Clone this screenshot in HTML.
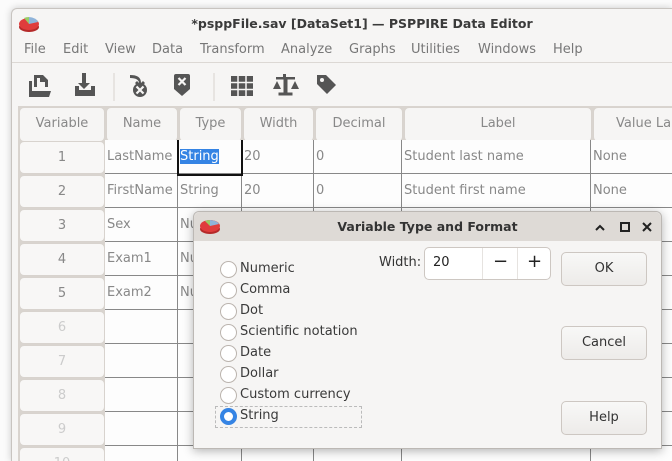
<!DOCTYPE html>
<html><head><style>
*{box-sizing:border-box;margin:0;padding:0}
html,body{overflow:hidden}
body{width:672px;height:461px;background:#fbfbfb;font-family:"DejaVu Sans","Liberation Sans",sans-serif;font-size:13px;color:#333;position:relative}
.win{position:absolute;left:11px;top:8px;width:661px;height:453px;background:#f6f5f4;border:1px solid #c8c4c0;border-bottom:none;border-right:none;border-radius:6px 0 0 0;box-shadow:0 0 8px rgba(0,0,0,.2);overflow:hidden}
.abs{position:absolute}
.title{left:0;top:0;width:100%;height:30px;text-align:center;font-weight:bold;font-size:12.5px;line-height:30px;color:#3a3a3a;padding-left:40px}
.menu{top:30px;left:0;height:24px;width:100%;border-bottom:1px solid #dcd8d4;color:#777}
.menu span{position:absolute;top:3px}
.grid{left:6px;top:97px;width:660px;height:360px;background:#d9d4cf}
.cell{position:absolute;background:#fdfdfd;border-right:1px solid #888;border-bottom:1px solid #888;color:#888;padding-left:2px;line-height:33px;white-space:nowrap;overflow:hidden}
.hdr{position:absolute;background:#f6f5f4;border:1px solid #d8d3ce;border-radius:5px;text-align:center;color:#888;line-height:32px;white-space:nowrap;overflow:hidden}
.dlg{position:absolute;left:193px;top:211px;width:469px;height:238px;background:#f6f5f4;border:1px solid #bcb8b4;border-radius:6px 6px 0 0;box-shadow:0 2px 10px rgba(0,0,0,.3)}
.radio{position:absolute;left:26px;width:17px;height:17px;border:1px solid #bbb4ae;border-radius:50%;background:#fff}
.rl{position:absolute;left:46px;color:#3a3a3a}
.btn{position:absolute;left:367px;width:86px;height:34px;border:1px solid #cdc7c2;border-radius:5px;background:linear-gradient(#f8f8f7,#edebe9);text-align:center;line-height:32px;color:#333}
#rows{position:absolute;left:0;top:0;width:672px;height:461px;overflow:hidden}
</style></head><body>
<div class="win">
 <svg class="abs" style="left:6px;top:5px" width="22" height="20"><ellipse cx="11" cy="13" rx="10" ry="5" fill="#b52a2a"/><ellipse cx="11" cy="10" rx="10" ry="6" fill="#e03c3c"/><path d="M11 10 L11 3 A10 6 0 0 1 20 8 Z" fill="#8fb3d9"/><path d="M11 10 L6 4 A10 6 0 0 1 11 3 Z" fill="#9c6"/></svg>
 <div class="abs title">*psppFile.sav [DataSet1] — PSPPIRE Data Editor</div>
 <div class="abs menu"><span style="left:12px">File</span><span style="left:51px">Edit</span><span style="left:93px">View</span><span style="left:140px">Data</span><span style="left:188px">Transform</span><span style="left:269px">Analyze</span><span style="left:337px">Graphs</span><span style="left:399px">Utilities</span><span style="left:466px">Windows</span><span style="left:541px">Help</span></div>
 <svg class="abs" style="left:0;top:55px" width="340" height="40" fill="#555">
  <path d="M22 11h9l5 5v7h-3v-5h-5v-4h-3v9h-3zM17 17h3v10h19l-2 6h-20z"/>
  <path d="M70 9h4v10h4l-6 6-6-6h4zM63 22h4v4h12v-4h4v10h-20z"/>
  <path d="M118 11c7 0 11 2 11 8l2-2 2 2-5 5-5-5 2-2 2 2c0-3-3-5-9-5z"/><circle cx="128" cy="26" r="7"/><path d="M124.5 22.5l7 7M131.5 22.5l-7 7" stroke="#f6f5f4" stroke-width="2.2"/>
  <path d="M164 10h12a2 2 0 0 1 2 2v13l-8 7-8-7v-13a2 2 0 0 1 2-2z"/><path d="M166.5 14l7 7M173.5 14l-7 7" stroke="#f6f5f4" stroke-width="2.2"/>
  <rect x="219" y="12" width="22" height="20"/><path d="M219 18.5h22M219 25.5h22M226 12v20M234 12v20" stroke="#f6f5f4" stroke-width="1.5"/>
  <path d="M271 10h3v3h9v2.5h-7.5v13h5v3h-14v-3h5v-13h-7.5v-2.5h7z"/><path d="M261 25l4-8 4 8z M279 25l4-8 4 8z"/>
  <path d="M305 11h9l10 10-9 9-10-10z"/><circle cx="310" cy="16" r="2" fill="#f6f5f4"/>
  <path d="M102 9v28M202 9v28" stroke="#d8d3ce"/>
 </svg>
 <div class="abs grid">
  <div class="hdr" style="left:1px;top:1px;width:86px;height:35px">Variable</div>
  <div class="hdr" style="left:88px;top:1px;width:72px;height:35px">Name</div>
  <div class="hdr" style="left:161px;top:1px;width:63px;height:35px">Type</div>
  <div class="hdr" style="left:225px;top:1px;width:71px;height:35px">Width</div>
  <div class="hdr" style="left:297px;top:1px;width:88px;height:35px">Decimal</div>
  <div class="hdr" style="left:386px;top:1px;width:188px;height:35px">Label</div>
  <div class="hdr" style="left:575px;top:1px;width:120px;height:35px;text-align:left;padding-left:22px">Value Labels</div>
 </div>
</div>
<div id="rows"></div>
<script>
var cols=[105,178,242,314,402,591,680];
var data=[["LastName","String","20","0","Student last name","None"],["FirstName","String","20","0","Student first name","None"],["Sex","Nu","","","",""],["Exam1","Nu","","","",""],["Exam2","Nu","","","",""]];
var h="";
for(var r=0;r<10;r++){var y=140+r*34;
 h+='<div class="hdr" style="left:19px;top:'+(y+1)+'px;width:86px;height:33px;background:#f8f7f6;color:'+(r<5?'#888':'#ccc')+'">'+(r+1)+'</div>';
 for(var c=0;c<6;c++){var t=r<5?data[r][c]:"";
  if(r==0&&c==1)t='<span style="background:#3584e4;color:#fff">String</span>';
  h+='<div class="cell" style="left:'+cols[c]+'px;top:'+y+'px;width:'+(cols[c+1]-cols[c])+'px;height:34px">'+t+'</div>';}
}
h+='<div style="position:absolute;left:177px;top:140px;width:66px;height:36px;border:2px solid #111;border-top:none"></div>';
document.getElementById('rows').innerHTML=h;
</script>
<div class="dlg">
 <div class="abs" style="left:0;top:0;width:100%;height:29px;background:#dedad6;border-radius:6px 6px 0 0"></div>
 <svg class="abs" style="left:5px;top:5px" width="22" height="19"><ellipse cx="11" cy="12" rx="10" ry="5" fill="#b52a2a"/><ellipse cx="11" cy="9" rx="10" ry="6" fill="#e03c3c"/><path d="M11 9 L11 3 A10 6 0 0 1 20 7 Z" fill="#8fb3d9"/><path d="M11 9 L6 4 A10 6 0 0 1 11 3 Z" fill="#9c6"/></svg>
 <div class="abs" style="left:0;top:0;width:100%;text-align:center;line-height:29px;font-weight:bold;font-size:12.5px;color:#333">Variable Type and Format</div>
 <svg class="abs" style="left:398px;top:8px" width="62" height="14" stroke="#222" stroke-width="2" fill="none"><path d="M4 10l4-4 4 4"/><rect x="29" y="3" width="8" height="8"/><path d="M51 3l8 8M59 3l-8 8"/></svg>
 <div class="abs" style="left:185px;top:43px;color:#333">Width:</div>
 <div class="abs" style="left:230px;top:35px;width:127px;height:33px;background:#fff;border:1px solid #cdc7c2;border-radius:5px">
  <span class="abs" style="left:8px;top:7px;color:#222">20</span>
  <div class="abs" style="left:57px;top:0;width:1px;height:31px;background:#e6e3e0"></div>
  <div class="abs" style="left:92px;top:0;width:1px;height:31px;background:#e6e3e0"></div>
  <span class="abs" style="left:68px;top:3px;font-size:18px;color:#222">−</span>
  <span class="abs" style="left:102px;top:3px;font-size:18px;color:#222">+</span>
 </div>
 <div class="btn" style="top:40px">OK</div>
 <div class="btn" style="top:114px">Cancel</div>
 <div class="btn" style="top:189px">Help</div>
 <div class="radio" style="top:49px"></div><div class="rl" style="top:49px">Numeric</div>
 <div class="radio" style="top:70px"></div><div class="rl" style="top:70px">Comma</div>
 <div class="radio" style="top:91px"></div><div class="rl" style="top:91px">Dot</div>
 <div class="radio" style="top:112px"></div><div class="rl" style="top:112px">Scientific notation</div>
 <div class="radio" style="top:133px"></div><div class="rl" style="top:133px">Date</div>
 <div class="radio" style="top:154px"></div><div class="rl" style="top:154px">Dollar</div>
 <div class="radio" style="top:175px"></div><div class="rl" style="top:175px">Custom currency</div>
 <div class="abs" style="left:21px;top:194px;width:147px;height:22px;border:1px dashed #bbb"></div>
 <div class="radio" style="top:196px;border:4px solid #3584e4"></div><div class="rl" style="top:196px">String</div>
</div>
</body></html>
